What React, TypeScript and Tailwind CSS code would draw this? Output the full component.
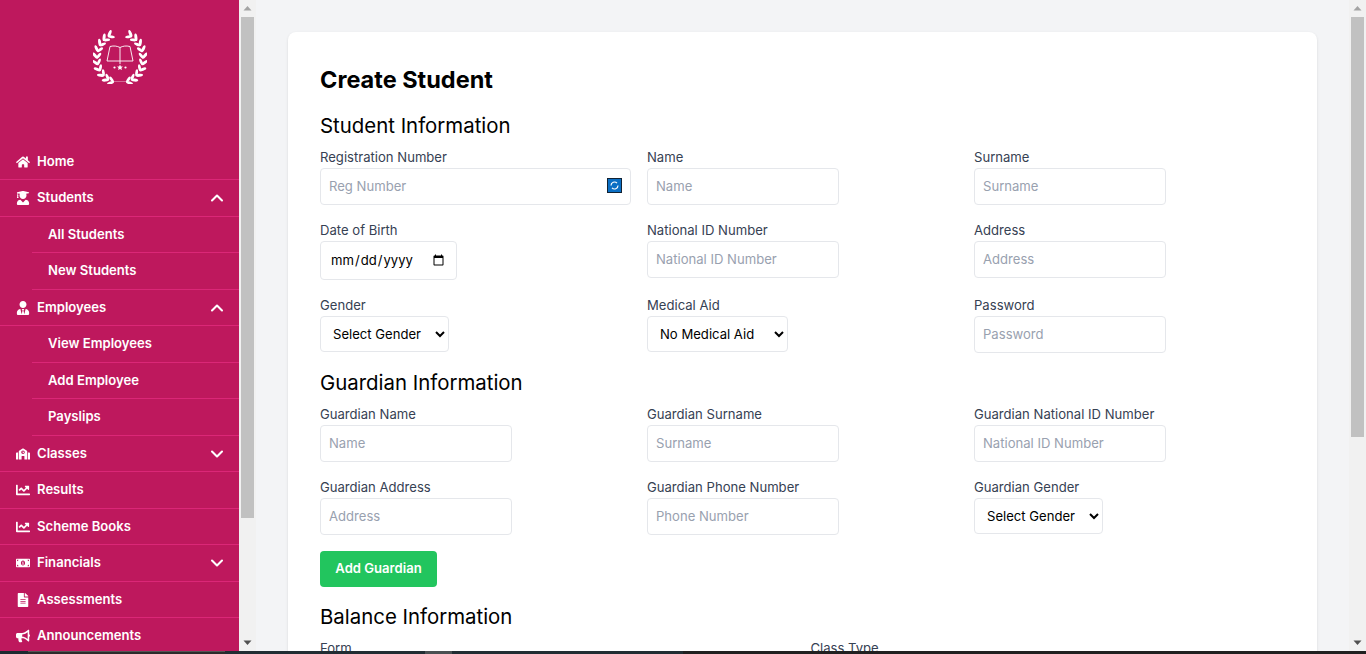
import React from 'react';
import {
  FaHome,
  FaUserGraduate,
  FaUserTie,
  FaSchool,
  FaChartLine,
  FaMoneyBillAlt,
  FaFileAlt,
  FaBullhorn,
} from 'react-icons/fa';
import { ChevronUp, ChevronDown } from 'lucide-react';

const Logo = () => {
  const angles = [30, 45, 60, 75, 90, 105, 120, 135, 150, 163];
  return (
    <svg width="54" height="54" viewBox="0 0 54 54" fill="none">
      {[1, -1].map((side) => (
        <g key={side} transform={side === -1 ? 'translate(54 0) scale(-1 1)' : undefined}>
          {angles.map((t) => {
            const r = (t * Math.PI) / 180;
            const x = 27 - 23 * Math.sin(r);
            const y = 28 - 25 * Math.cos(r);
            return (
              <g key={t}>
                <ellipse cx={x} cy={y} rx="3.8" ry="1.5" fill="#fff" transform={`rotate(${-t - 38} ${x} ${y}) translate(3 0)`} />
                <ellipse cx={x} cy={y} rx="3.4" ry="1.4" fill="#fff" transform={`rotate(${-t + 38} ${x} ${y}) translate(3 0)`} />
              </g>
            );
          })}
        </g>
      ))}
      <path d="M17 16.5 C21 15.5 24 16 27 17.5 C30 16 33 15.5 37 16.5 L40 31 L14 31 Z" stroke="#fff" strokeOpacity="0.9" strokeWidth="1" />
      <path d="M27 17.5 V34" stroke="#fff" strokeOpacity="0.9" strokeWidth="1" />
      <path d="M27 34.5 l.9 1.9 2 .2-1.5 1.4.5 2-1.9-1-1.9 1 .5-2-1.5-1.4 2-.2z" fill="#fff" />
      <circle cx="21.5" cy="37.5" r="1.1" fill="#fff" />
      <circle cx="32.5" cy="37.5" r="1.1" fill="#fff" />
      <path d="M21 51.5 H33" stroke="#fff" strokeOpacity="0.35" strokeWidth="1" />
    </svg>
  );
};

const menu = [
  { label: 'Home', icon: FaHome },
  { label: 'Students', icon: FaUserGraduate, open: true, children: ['All Students', 'New Students'] },
  { label: 'Employees', icon: FaUserTie, open: true, children: ['View Employees', 'Add Employee', 'Payslips'] },
  { label: 'Classes', icon: FaSchool, chevron: true },
  { label: 'Results', icon: FaChartLine },
  { label: 'Scheme Books', icon: FaChartLine },
  { label: 'Financials', icon: FaMoneyBillAlt, chevron: true },
  { label: 'Assessments', icon: FaFileAlt },
  { label: 'Announcements', icon: FaBullhorn },
];

const Sidebar = () => (
  <aside className="w-[239px] h-full shrink-0 bg-[#be185d] overflow-hidden text-white text-[13.1px] font-semibold">
    <div className="h-[143.5px] flex justify-center pt-[30px]">
      <Logo />
    </div>
    {menu.map((item) => {
      const Icon = item.icon;
      return (
        <div key={item.label}>
          <div className="h-[36.5px] pl-4 pr-3 pt-[0.5px] flex items-center border-b border-[#db2777]">
            <Icon className="w-[14px] h-[14px] mr-[7px]" />
            <span>{item.label}</span>
            {item.open && <ChevronUp className="ml-auto w-5 h-5" strokeWidth={2.5} />}
            {item.chevron && <ChevronDown className="ml-auto w-5 h-5" strokeWidth={2.5} />}
          </div>
          {item.children?.map((child) => (
            <div key={child} className="ml-8 pl-4 h-[36.5px] pt-[0.5px] flex items-center border-b border-[#db2777]">
              {child}
            </div>
          ))}
        </div>
      );
    })}
  </aside>
);

const Scrollbar = ({ height }: { height: number }) => (
  <div className="w-[17px] h-full shrink-0 bg-[#f1f1f1] flex flex-col items-center">
    <svg width="17" height="17" viewBox="0 0 17 17" className="shrink-0">
      <path d="M8.5 6 L12.5 10.5 H4.5 Z" fill="#a3a3a3" />
    </svg>
    <div className="w-[13px] bg-[#c1c1c1] shrink-0" style={{ height }} />
    <svg width="17" height="17" viewBox="0 0 17 17" className="shrink-0 mt-auto">
      <path d="M8.5 11 L12.5 6.5 H4.5 Z" fill="#505050" />
    </svg>
  </div>
);

const inputClass =
  'block w-[192px] h-[37px] px-2 pb-px text-[13.1px] bg-white border border-gray-200 rounded placeholder:text-gray-400 outline-none';
const selectClass = 'block h-[36px] px-2 text-[13.1px] text-black bg-white border border-gray-200 rounded outline-none';

const Field = ({ label, children }: { label: string; children: React.ReactNode }) => (
  <div>
    <label className="block text-[13.1px] leading-[20px] text-gray-700 mb-px">{label}</label>
    {children}
  </div>
);

const TextField = ({ label, placeholder }: { label: string; placeholder: string }) => (
  <Field label={label}>
    <input className={inputClass} placeholder={placeholder} />
  </Field>
);

const SelectField = ({ label, value, width }: { label: string; value: string; width: string }) => (
  <Field label={label}>
    <select className={`${selectClass} ${width}`} defaultValue={value}>
      <option>{value}</option>
    </select>
  </Field>
);

export default function App() {
  return (
    <div className="w-[1366px] h-[654px] overflow-hidden flex flex-col font-['Inter',sans-serif]">
      <div className="h-[651px] flex">
        <Sidebar />
        <Scrollbar height={501} />
        <main className="flex-1 h-full bg-[#f3f4f6] overflow-hidden px-8 pt-8">
          <div className="bg-white rounded-lg shadow-sm h-[700px] p-8">
            <h1 className="text-[23.5px] font-bold text-black leading-8 mb-4">Create Student</h1>

            <h2 className="text-[20.4px] font-normal text-black leading-7 mb-[7px]">Student Information</h2>
            <div className="grid grid-cols-3 gap-x-4 gap-y-[15px]">
              <Field label="Registration Number">
                <div className="relative">
                  <input className={`${inputClass} w-full`} placeholder="Reg Number" />
                  <span className="absolute right-[9px] top-[10px] w-[15px] h-[15px] bg-[#0b6fc4] border border-[#112233] flex items-center justify-center">
                    <svg width="11" height="11" viewBox="0 0 11 11" fill="none" stroke="#fff" strokeWidth="1.2">
                      <path d="M2 5.5 a3.5 3.5 0 0 1 6-2.4 M9 5.5 a3.5 3.5 0 0 1-6 2.4" />
                    </svg>
                  </span>
                </div>
              </Field>
              <TextField label="Name" placeholder="Name" />
              <TextField label="Surname" placeholder="Surname" />
              <Field label="Date of Birth">
                <input type="date" className="block w-[137px] h-[39px] px-[9px] text-[13.1px] text-black bg-white border border-gray-200 rounded outline-none" />
              </Field>
              <TextField label="National ID Number" placeholder="National ID Number" />
              <TextField label="Address" placeholder="Address" />
              <SelectField label="Gender" value="Select Gender" width="w-[129px]" />
              <SelectField label="Medical Aid" value="No Medical Aid" width="w-[141px]" />
              <TextField label="Password" placeholder="Password" />
            </div>

            <h2 className="text-[20.4px] font-normal text-black leading-7 mt-4 mb-[7px]">Guardian Information</h2>
            <div className="grid grid-cols-3 gap-x-4 gap-y-[15px]">
              <TextField label="Guardian Name" placeholder="Name" />
              <TextField label="Guardian Surname" placeholder="Surname" />
              <TextField label="Guardian National ID Number" placeholder="National ID Number" />
              <TextField label="Guardian Address" placeholder="Address" />
              <TextField label="Guardian Phone Number" placeholder="Phone Number" />
              <SelectField label="Guardian Gender" value="Select Gender" width="w-[129px]" />
            </div>

            <button className="mt-4 block w-[117px] h-9 bg-[#22c55e] text-white text-[13.1px] font-semibold rounded">Add Guardian</button>

            <h2 className="text-[20.4px] font-normal text-black leading-7 mt-4 mb-[7px]">Balance Information</h2>
            <div className="grid grid-cols-2 gap-x-4">
              <label className="block text-[13.1px] leading-[20px] text-gray-700">Form</label>
              <label className="block text-[13.1px] leading-[20px] text-gray-700">Class Type</label>
            </div>
          </div>
        </main>
        <Scrollbar height={420} />
      </div>
      <div className="h-[3px] shrink-0 flex bg-[#202020]">
        <div className="w-[28px] bg-[#1c2a30]" />
        <div className="w-[197px] bg-[#2b2b2b] border-t border-[#555555]" />
        <div className="w-[200px] bg-[#212d33]" />
        <div className="w-[27px] bg-[#4a5052]" />
        <div className="w-[231px] bg-[#212d33]" />
      </div>
    </div>
  );
}
